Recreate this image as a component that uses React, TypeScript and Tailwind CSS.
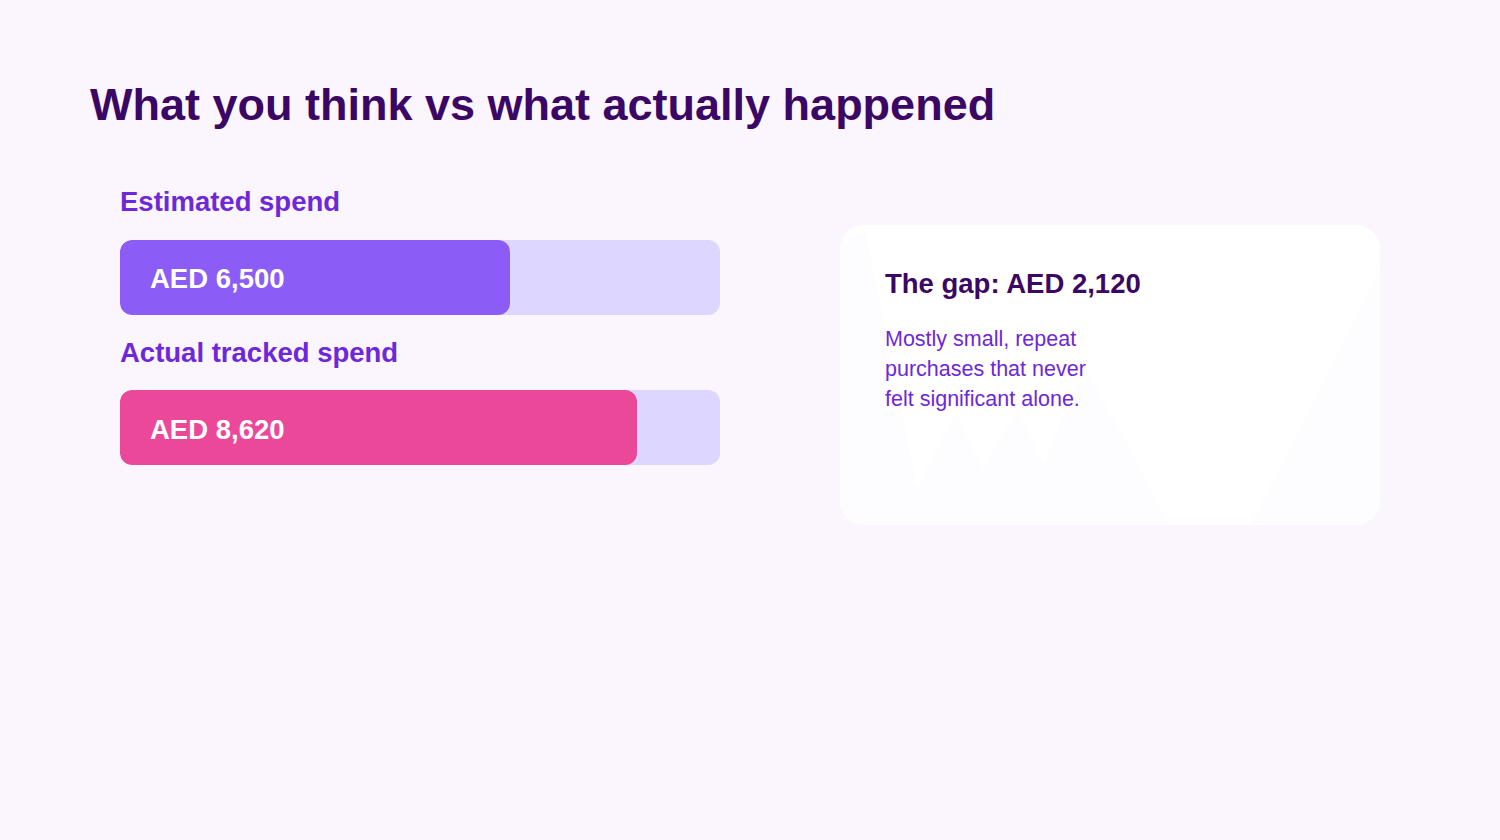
const bars = [
  { label: 'Estimated spend', amount: 'AED 6,500', value: 6500, color: 'bg-[#8b5cf6]' },
  { label: 'Actual tracked spend', amount: 'AED 8,620', value: 8620, color: 'bg-[#ec4899]' },
];

const MAX = 10000;

const SpendBar = ({ label, amount, value, color }: (typeof bars)[number]) => {
  return (
    <div className="flex flex-col">
      <div className="text-[27.5px] font-bold leading-none text-[#6d28d9]">{label}</div>
      <div className="mt-[24px] h-[75px] w-[600px] overflow-hidden rounded-[12px] bg-[#ddd6fe]">
        <div
          className={`flex h-full items-center rounded-[12px] pl-[30px] pt-[4px] ${color}`}
          style={{ width: `${(value / MAX) * 100}%` }}
        >
          <span className="text-[27.5px] font-bold leading-none text-white">{amount}</span>
        </div>
      </div>
    </div>
  );
};

const Mountains = () => (
  <svg className="absolute inset-0 h-full w-full" viewBox="0 0 540 300" preserveAspectRatio="none">
    <polygon
      points="0,300 0,12 26,8 77,262 115,187 143,245 177,183 203,238 245,140 330,300"
      fill="#7c3aed"
      fillOpacity="0.012"
    />
    <polygon points="410,300 540,45 540,300" fill="#7c3aed" fillOpacity="0.01" />
  </svg>
);

export default function App() {
  return (
    <div className="min-h-[840px] bg-[#fbf5fe] px-[90px] pt-[82px] font-['Liberation_Sans',Arial,sans-serif]">
      <h1 className="text-[45px] font-bold leading-none text-[#3b0764]">What you think vs what actually happened</h1>

      <div className="mt-[61px] flex items-start gap-[120px] pl-[30px]">
        <div className="flex flex-col gap-[24px]">
          {bars.map((bar) => (
            <SpendBar key={bar.label} {...bar} />
          ))}
        </div>

        <div className="relative mt-[37px] h-[300px] w-[540px] overflow-hidden rounded-[24px] bg-white">
          <Mountains />
          <div className="relative px-[45px] pt-[45px]">
            <h2 className="text-[27.5px] font-bold leading-none text-[#3b0764]">The gap: AED 2,120</h2>
            <p className="mt-[26px] max-w-[215px] text-[21.5px] leading-[30px] text-[#6d28d9]">
              Mostly small, repeat purchases that never felt significant alone.
            </p>
          </div>
        </div>
      </div>
    </div>
  );
}
